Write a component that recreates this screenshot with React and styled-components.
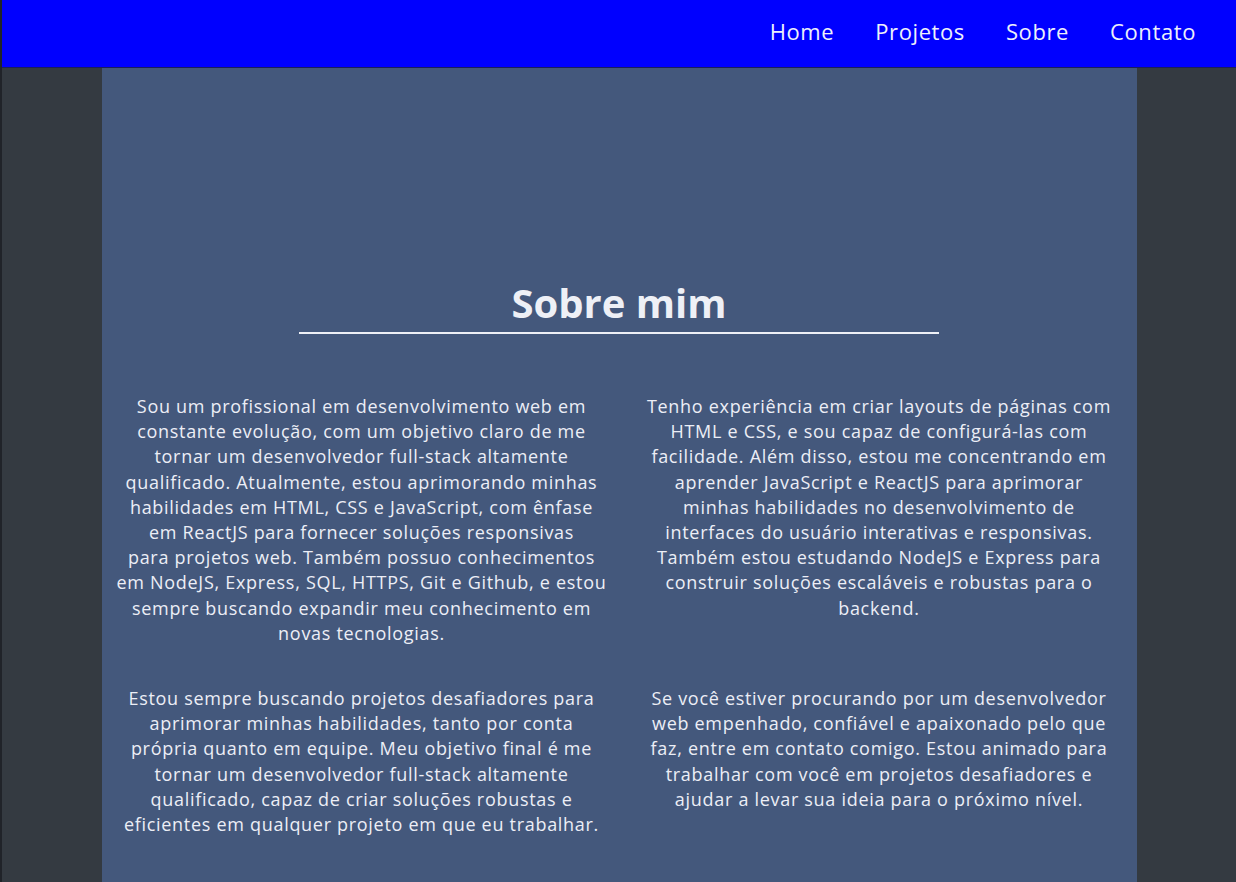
import React from 'react';
import styled, { createGlobalStyle } from 'styled-components';

const GlobalStyle = createGlobalStyle`
  * { box-sizing: border-box; }
  html, body {
    margin: 0;
    padding: 0;
    background: #343a41;
    font-family: "Open Sans", "Noto Sans", sans-serif;
    overflow: hidden;
  }
  body {
    border-left: 2px solid #202329;
  }
`;

const Header = styled.header`
  height: 68px;
  background: #0000ff;
  border-bottom: 1px solid #1b1f5a;
  display: flex;
  align-items: center;
  justify-content: flex-end;
  padding-right: 40px;
`;

const Nav = styled.nav`
  display: flex;
  gap: 41px;
`;

const NavLink = styled.a`
  color: #eef0fb;
  font-size: 22px;
  text-decoration: none;
  letter-spacing: 0.6px;
  margin-top: -5px;
`;

const Panel = styled.main`
  width: 1035px;
  margin: 0 auto;
  min-height: 820px;
  background: #44587c;
  padding-top: 212px;
  color: #eceef6;
`;

const Title = styled.h1`
  margin: 0 auto;
  width: 640px;
  text-align: center;
  font-size: 40px;
  font-weight: 700;
  line-height: 46px;
  padding-bottom: 6px;
  border-bottom: 2px solid #eef0f6;
  color: #eef0f6;
`;

const Grid = styled.div`
  display: grid;
  grid-template-columns: 1fr 1fr;
  row-gap: 40px;
  padding-top: 60px;
`;

const Text = styled.p`
  margin: 0;
  padding: 0 25px 0 15px;
  text-align: center;
  font-size: 18px;
  line-height: 25.2px;
  letter-spacing: 0.7px;
  white-space: nowrap;
`;

const paragraphs = [
  [
    'Sou um profissional em desenvolvimento web em',
    'constante evolução, com um objetivo claro de me',
    'tornar um desenvolvedor full-stack altamente',
    'qualificado. Atualmente, estou aprimorando minhas',
    'habilidades em HTML, CSS e JavaScript, com ênfase',
    'em ReactJS para fornecer soluções responsivas',
    'para projetos web. Também possuo conhecimentos',
    'em NodeJS, Express, SQL, HTTPS, Git e Github, e estou',
    'sempre buscando expandir meu conhecimento em',
    'novas tecnologias.',
  ],
  [
    'Tenho experiência em criar layouts de páginas com',
    'HTML e CSS, e sou capaz de configurá-las com',
    'facilidade. Além disso, estou me concentrando em',
    'aprender JavaScript e ReactJS para aprimorar',
    'minhas habilidades no desenvolvimento de',
    'interfaces do usuário interativas e responsivas.',
    'Também estou estudando NodeJS e Express para',
    'construir soluções escaláveis e robustas para o',
    'backend.',
  ],
  [
    'Estou sempre buscando projetos desafiadores para',
    'aprimorar minhas habilidades, tanto por conta',
    'própria quanto em equipe. Meu objetivo final é me',
    'tornar um desenvolvedor full-stack altamente',
    'qualificado, capaz de criar soluções robustas e',
    'eficientes em qualquer projeto em que eu trabalhar.',
  ],
  [
    'Se você estiver procurando por um desenvolvedor',
    'web empenhado, confiável e apaixonado pelo que',
    'faz, entre em contato comigo. Estou animado para',
    'trabalhar com você em projetos desafiadores e',
    'ajudar a levar sua ideia para o próximo nível.',
  ],
];

export default function App() {
  return (
    <>
      <GlobalStyle />
      <Header>
        <Nav>
          <NavLink href="#">Home</NavLink>
          <NavLink href="#">Projetos</NavLink>
          <NavLink href="#">Sobre</NavLink>
          <NavLink href="#">Contato</NavLink>
        </Nav>
      </Header>

      <Panel>
        <Title>Sobre mim</Title>
        <Grid>
          {paragraphs.map((lines, i) => (
            <Text key={i}>
              {lines.map((line, j) => (
                <React.Fragment key={j}>
                  {line}
                  {j < lines.length - 1 && <br />}
                </React.Fragment>
              ))}
            </Text>
          ))}
        </Grid>
      </Panel>
    </>
  );
}
